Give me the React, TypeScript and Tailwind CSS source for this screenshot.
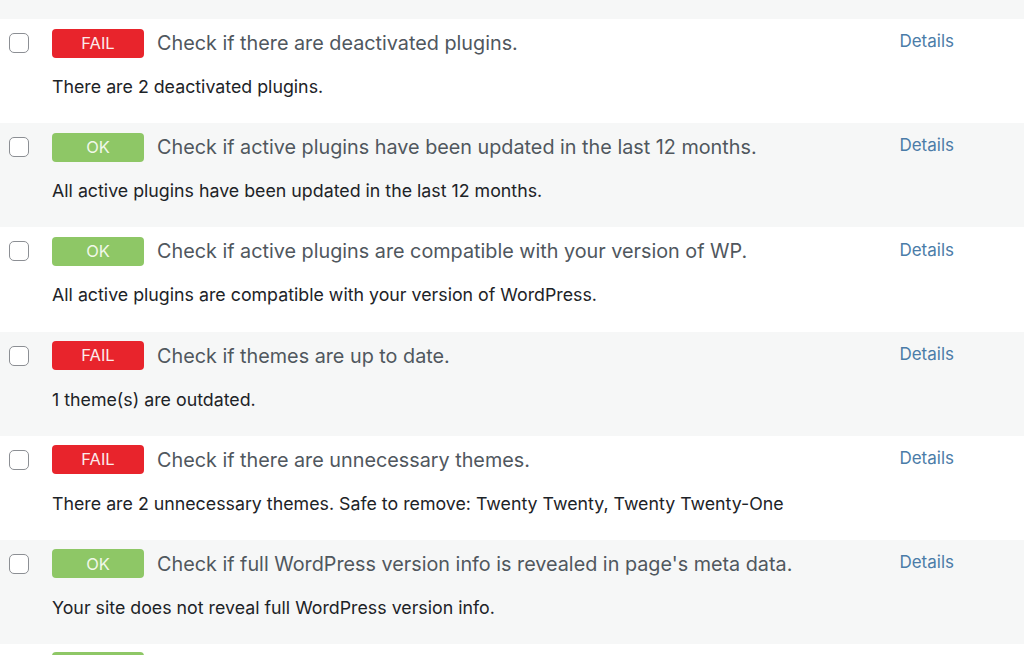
import React from 'react';

type Check = {
  status: 'FAIL' | 'OK';
  title: string;
  result: string;
};

const checks: Check[] = [
  { status: 'FAIL', title: 'Check if there are deactivated plugins.', result: 'There are 2 deactivated plugins.' },
  { status: 'OK', title: 'Check if active plugins have been updated in the last 12 months.', result: 'All active plugins have been updated in the last 12 months.' },
  { status: 'OK', title: 'Check if active plugins are compatible with your version of WP.', result: 'All active plugins are compatible with your version of WordPress.' },
  { status: 'FAIL', title: 'Check if themes are up to date.', result: '1 theme(s) are outdated.' },
  { status: 'FAIL', title: 'Check if there are unnecessary themes.', result: 'There are 2 unnecessary themes. Safe to remove: Twenty Twenty, Twenty Twenty-One' },
  { status: 'OK', title: "Check if full WordPress version info is revealed in page's meta data.", result: 'Your site does not reveal full WordPress version info.' },
];

const Badge: React.FC<{ status: Check['status'] }> = ({ status }) => (
  <span
    className={
      status === 'FAIL'
        ? 'flex h-[29px] w-[92px] shrink-0 items-center justify-center rounded-[4px] bg-[#e8242c] text-[16.5px] text-[#fbeaea]'
        : 'flex h-[29px] w-[92px] shrink-0 items-center justify-center rounded-[4px] bg-[#8ec766] text-[16.5px] text-[#f1f8e9]'
    }
  >
    {status}
  </span>
);

const Row: React.FC<{ check: Check; odd: boolean }> = ({ check, odd }) => (
  <div className={`h-[104.2px] ${odd ? 'bg-[#f6f7f7]' : 'bg-white'}`}>
    <div className="flex items-center pt-[9px]">
      <span className="ml-[9px] h-[20px] w-[20px] shrink-0 rounded-[5px] border border-[#8c8f94] bg-white" />
      <span className="ml-[23px]"><Badge status={check.status} /></span>
      <span className="ml-[13px] flex-1 text-[19.8px] leading-[30px] text-[#50575e]">{check.title}</span>
      <a href="#" className="mr-[70px] -mt-[2px] text-[17px] text-[#4b7ca8]">Details</a>
    </div>
    <p className="ml-[52px] mt-[17px] text-[17.8px] leading-[24px] text-[#1d2327]">{check.result}</p>
  </div>
);

export default function App() {
  return (
    <div className="h-[655px] overflow-hidden bg-[#f6f7f7]" style={{ fontFamily: 'Inter, "Noto Sans", sans-serif' }}>
      <div className="h-[19px]" />
      {checks.map((c, i) => (
        <Row key={i} check={c} odd={i % 2 === 1} />
      ))}
      <div className="h-[104px] bg-white">
        <div className="pt-[8px] pl-[52px]">
          <span className="block h-[29px] w-[92px] rounded-[4px] bg-[#8ec766]" />
        </div>
      </div>
    </div>
  );
}
